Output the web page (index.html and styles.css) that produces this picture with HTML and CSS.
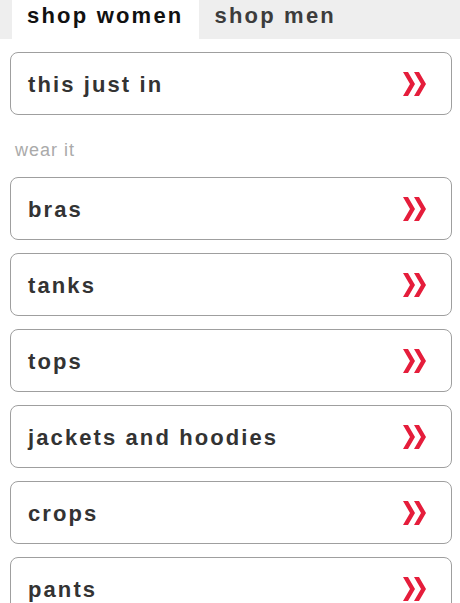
FILE: index.html
```html
<!DOCTYPE html>
<html>
<head>
    <title>shop</title>
    <link rel="stylesheet" href="styles.css">
</head>
<body>
    <div class="tabs">
        <a class="tab active" href="#">shop women</a>
        <a class="tab" href="#">shop men</a>
    </div>

    <div class="menu">
        <a class="item" href="#">
            <span>this just in</span>
            <svg class="more" viewBox="0 0 24 24"><polygon points="0,0 5,0 12,12 5,24 0,24 7,12"/><polygon points="11,0 16,0 23,12 16,24 11,24 18,12"/></svg>
        </a>

        <div class="label">wear it</div>

        <a class="item" href="#">
            <span>bras</span>
            <svg class="more" viewBox="0 0 24 24"><polygon points="0,0 5,0 12,12 5,24 0,24 7,12"/><polygon points="11,0 16,0 23,12 16,24 11,24 18,12"/></svg>
        </a>
        <a class="item" href="#">
            <span>tanks</span>
            <svg class="more" viewBox="0 0 24 24"><polygon points="0,0 5,0 12,12 5,24 0,24 7,12"/><polygon points="11,0 16,0 23,12 16,24 11,24 18,12"/></svg>
        </a>
        <a class="item" href="#">
            <span>tops</span>
            <svg class="more" viewBox="0 0 24 24"><polygon points="0,0 5,0 12,12 5,24 0,24 7,12"/><polygon points="11,0 16,0 23,12 16,24 11,24 18,12"/></svg>
        </a>
        <a class="item" href="#">
            <span>jackets and hoodies</span>
            <svg class="more" viewBox="0 0 24 24"><polygon points="0,0 5,0 12,12 5,24 0,24 7,12"/><polygon points="11,0 16,0 23,12 16,24 11,24 18,12"/></svg>
        </a>
        <a class="item" href="#">
            <span>crops</span>
            <svg class="more" viewBox="0 0 24 24"><polygon points="0,0 5,0 12,12 5,24 0,24 7,12"/><polygon points="11,0 16,0 23,12 16,24 11,24 18,12"/></svg>
        </a>
        <a class="item" href="#">
            <span>pants</span>
            <svg class="more" viewBox="0 0 24 24"><polygon points="0,0 5,0 12,12 5,24 0,24 7,12"/><polygon points="11,0 16,0 23,12 16,24 11,24 18,12"/></svg>
        </a>
    </div>
</body>
</html>
```

FILE: styles.css
```css
body {
    margin: 0;
    font-family: 'Liberation Sans', Arial, sans-serif;
    background: white;
    overflow: hidden;
}
a {
    text-decoration: none;
}
.tabs {
    display: flex;
    background: #eeeeee;
    padding-left: 12px;
    height: 39px;
}
.tab {
    font-size: 22px;
    font-weight: bold;
    line-height: 22px;
    letter-spacing: 2.2px;
    color: #3c3c3c;
    padding: 5px 15px 12px 15px;
}
.tab.active {
    background: white;
    color: #111;
    padding-right: 16px;
}
.menu {
    display: flex;
    flex-direction: column;
    gap: 13px;
    padding: 13px 8px 0 10px;
}
.item {
    display: flex;
    align-items: center;
    justify-content: space-between;
    box-sizing: border-box;
    height: 63px;
    padding: 3px 24px 0 17px;
    border: 1px solid #9f9f9f;
    border-radius: 8px;
    color: #333;
    font-size: 22px;
    font-weight: bold;
    letter-spacing: 2.1px;
}
.more {
    width: 24px;
    height: 24px;
    margin-top: -3px;
    fill: #e51d3b;
}
.label {
    color: #aaa;
    font-size: 18px;
    letter-spacing: 1px;
    padding: 12px 0 0 5px;
    height: 36px;
    box-sizing: border-box;
}
```
